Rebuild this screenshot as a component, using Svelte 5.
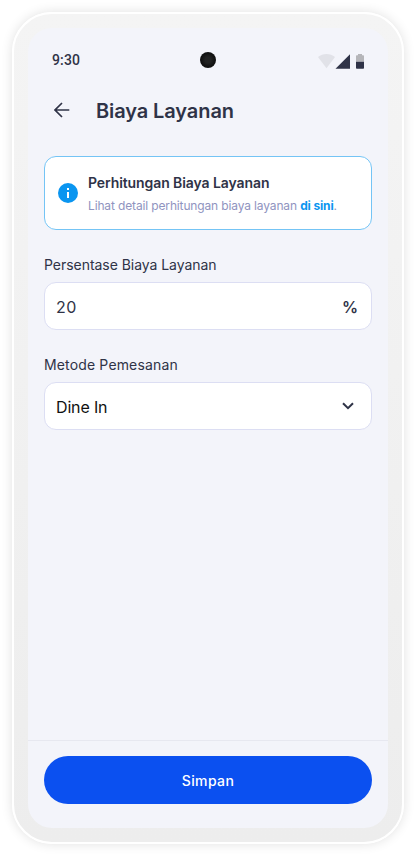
<script>
  let percentage = "20"; // Persentase biaya layanan
  let method = "Dine In"; // Metode pemesanan
</script>

<div class="device">
  <div class="screen">
    <div class="status-bar">
      <span class="time">9:30</span>
      <span class="camera"></span>
      <svg class="status-icons" width="46" height="16" viewBox="0 0 46 16">
        <path d="M0 4.100C2.400 2 5.300 1 8.500 1s6.100 1 8.500 3.100L8.500 15.200z" fill="#e1e2e8" />
        <path d="M17.500 15.800 32 1.300v14.500z" fill="#2f3347" />
        <path d="M38 8.800V3q0-.8.8-.8H40V1h4v1.200h1.200q.8 0 .8.8v5.800z" fill="#b5b5b9" />
        <path d="M38 8.800h8v6.200q0 .8-.8.8h-6.400q-.8 0-.8-.8z" fill="#2f3347" />
      </svg>
    </div>

    <header class="app-bar">
      <button type="button" class="back" aria-label="Kembali">
        <svg width="16" height="16" viewBox="0 0 16 16">
          <path d="M15.300 8H1.200M8 1 1 8l7 7" />
        </svg>
      </button>
      <h1>Biaya Layanan</h1>
    </header>

    <main>
      <section class="info">
        <svg width="20" height="20" viewBox="0 0 20 20">
          <circle cx="10" cy="10" r="10" fill="#0a95f0" />
          <path d="M9 5h2v2H9zM9 9h2v6H9z" fill="#fff" />
        </svg>
        <div>
          <h2>Perhitungan Biaya Layanan</h2>
          <p>Lihat detail perhitungan biaya layanan <b>di sini</b>.</p>
        </div>
      </section>

      <label class="percentage-label" for="percentage">Persentase Biaya Layanan</label>
      <div class="field">
        <input id="percentage" type="text" bind:value={percentage} />
        <span class="suffix">%</span>
      </div>

      <label class="method-label" for="method">Metode Pemesanan</label>
      <button type="button" id="method" class="field">
        <span class="value">{method}</span>
        <svg class="chevron" width="12" height="8" viewBox="0 0 12 8">
          <path d="M1 1.200 6 6.200l5-5" />
        </svg>
      </button>
    </main>

    <footer>
      <button type="button" class="save">Simpan</button>
    </footer>
  </div>
</div>

<style>
  :global(body) {
    margin: 0;
    background: #fff;
  }

  .device {
    box-sizing: border-box;
    width: 392px;
    height: 832px;
    margin: 12px;
    padding: 14px;
    border: 2px solid #fff;
    border-radius: 40px;
    background: linear-gradient(#f4f4f4, #ededed);
    box-shadow: 0 0 12px rgba(0, 0, 0, 0.12);
    font-family: Inter, "Open Sans", sans-serif;
    color: #2f3347;
  }

  .screen {
    display: flex;
    flex-direction: column;
    height: 800px;
    border-radius: 24px;
    background: #f3f4fa;
    overflow: hidden;
  }

  button {
    border: 0;
    padding: 0;
    background: none;
    font: inherit;
    color: inherit;
    cursor: pointer;
  }

  /* Bilah status */
  .status-bar {
    display: grid;
    grid-template-columns: 1fr 16px 1fr;
    align-items: center;
    height: 52px;
    padding: 12px 24px 0;
    box-sizing: border-box;
  }

  .time {
    font: 500 14px/20px Roboto, sans-serif;
    letter-spacing: 0.14px;
  }

  .camera {
    width: 16px;
    height: 16px;
    border-radius: 50%;
    background: radial-gradient(#222 25%, #111 60%);
  }

  .status-icons {
    justify-self: end;
    margin-top: 2px;
  }

  /* Judul halaman */
  .app-bar {
    display: flex;
    align-items: center;
    height: 60px;
    padding-left: 26px;
  }

  .back {
    display: flex;
    width: 42px;
  }

  .back path,
  .chevron path {
    fill: none;
    stroke: #2f3347;
    stroke-width: 2;
  }

  .back path {
    stroke-width: 1.7;
  }

  h1 {
    margin: 0;
    padding-top: 2px;
    font-size: 20px;
    font-weight: 600;
    line-height: 28px;
    letter-spacing: -0.1px;
  }

  main {
    flex: 1;
    padding: 16px 16px 0;
  }

  /* Kotak informasi */
  .info {
    display: flex;
    align-items: center;
    gap: 10px;
    box-sizing: border-box;
    height: 74px;
    padding: 0 13px;
    margin-bottom: 24px;
    border: 1px solid #74c4f5;
    border-radius: 12px;
    background: #fff;
  }

  .info div {
    padding-top: 2px;
  }

  h2 {
    margin: 0;
    font-size: 14px;
    font-weight: 600;
    line-height: 24px;
    letter-spacing: -0.09px;
    white-space: nowrap;
  }

  p {
    margin: 0;
    font-size: 12px;
    font-weight: 400;
    line-height: 22px;
    letter-spacing: -0.14px;
    white-space: nowrap;
    color: #9094bf;
  }

  p b {
    font-weight: 700;
    color: #0a95f0;
  }

  /* Formulir */
  label {
    display: block;
    margin-bottom: 6px;
    font-size: 14px;
    line-height: 22px;
  }

  .percentage-label {
    letter-spacing: -0.04px;
  }

  .method-label {
    letter-spacing: 0.15px;
  }

  .field {
    display: flex;
    align-items: center;
    justify-content: space-between;
    box-sizing: border-box;
    width: 100%;
    height: 48px;
    margin-bottom: 24px;
    padding: 0 13px 0 11px;
    border: 1px solid #dcdef3;
    border-radius: 12px;
    background: #fff;
    font-size: 16px;
  }

  input {
    width: 200px;
    padding: 2px 0 0;
    border: 0;
    outline: 0;
    background: none;
    font: inherit;
    letter-spacing: 0.6px;
    color: inherit;
  }

  .suffix {
    padding-top: 2px;
    font-weight: 600;
  }

  .value {
    padding-top: 2px;
    letter-spacing: -0.15px;
    color: #111;
  }

  .chevron {
    margin-right: 4px;
  }

  /* Tombol simpan */
  footer {
    padding: 15px 16px 24px;
    border-top: 1px solid #e7e8f0;
  }

  .save {
    display: block;
    width: 100%;
    height: 48px;
    border-radius: 24px;
    background: #0b50f0;
    color: #fff;
    font-size: 14px;
    font-weight: 500;
    letter-spacing: 0.4px;
  }
</style>
